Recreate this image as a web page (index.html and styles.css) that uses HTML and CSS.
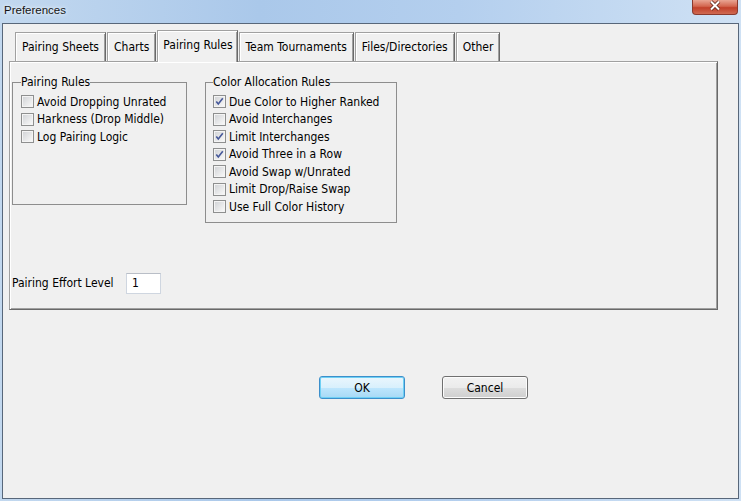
FILE: index.html
```html
<!DOCTYPE html>
<html>
<head>
<title>Preferences</title>
<link rel="stylesheet" href="styles.css">
</head>
<body>
<div class="window">
  <div class="titlebar">
    <span class="title">Preferences</span>
    <span class="close"><svg width="14" height="11" viewBox="0 0 14 11"><path class="x-shade" d="M3 1.5 L11 9.5 M11 1.5 L3 9.5"/><path class="x-mark" d="M3 1.5 L11 9.5 M11 1.5 L3 9.5"/></svg></span>
  </div>
  <div class="client">
    <div class="tabs">
      <div class="tab">Pairing Sheets</div>
      <div class="tab">Charts</div>
      <div class="tab selected">Pairing Rules</div>
      <div class="tab">Team Tournaments</div>
      <div class="tab">Files/Directories</div>
      <div class="tab">Other</div>
    </div>
    <div class="panel">
      <div class="groups">
        <fieldset class="group pairing">
          <legend>Pairing Rules</legend>
          <div class="check"><span class="box"></span>Avoid Dropping Unrated</div>
          <div class="check"><span class="box"></span>Harkness (Drop Middle)</div>
          <div class="check"><span class="box"></span>Log Pairing Logic</div>
        </fieldset>
        <fieldset class="group colors">
          <legend>Color Allocation Rules</legend>
          <div class="check"><span class="box"><svg viewBox="0 0 9 9"><path d="M1.3 4.4 L3.3 7 L7.8 1.2"/></svg></span>Due Color to Higher Ranked</div>
          <div class="check"><span class="box"></span>Avoid Interchanges</div>
          <div class="check"><span class="box"><svg viewBox="0 0 9 9"><path d="M1.3 4.4 L3.3 7 L7.8 1.2"/></svg></span>Limit Interchanges</div>
          <div class="check"><span class="box"><svg viewBox="0 0 9 9"><path d="M1.3 4.4 L3.3 7 L7.8 1.2"/></svg></span>Avoid Three in a Row</div>
          <div class="check"><span class="box"></span>Avoid Swap w/Unrated</div>
          <div class="check"><span class="box"></span>Limit Drop/Raise Swap</div>
          <div class="check"><span class="box"></span>Use Full Color History</div>
        </fieldset>
      </div>
      <div class="effort">
        <span class="effort-label">Pairing Effort Level</span>
        <span class="field">1</span>
      </div>
    </div>
    <div class="buttons">
      <button class="btn default">OK</button>
      <button class="btn">Cancel</button>
    </div>
  </div>
</div>
</body>
</html>
```

FILE: styles.css
```css
* { box-sizing: border-box; }

body {
  margin: 0;
  background: #c4d9ef;
  font: 12px "DejaVu Sans Condensed", "Liberation Sans", sans-serif;
  color: #000;
}

.window {
  width: 741px;
  height: 501px;
  padding: 0 2px 2px 2px;
  display: flex;
  flex-direction: column;
  background: linear-gradient(to right, #c2d8ef, #aac8ea 35%, #b4cfee 62%, #cfe1f4);
}

/* title bar */
.titlebar { height: 23px; display: flex; justify-content: space-between; align-items: flex-start; }
.title {
  font: 11.5px "Liberation Sans", sans-serif;
  color: #141414;
  padding: 4px 0 0 2px;
  text-shadow: 0 0 5px #e8f1fa, 0 0 3px #e8f1fa;
}
.close {
  width: 46px;
  height: 15px;
  margin-right: 1px;
  display: flex;
  justify-content: center;
  align-items: flex-start;
  border: 1px solid #8a3a2e;
  border-top: 0;
  border-radius: 0 0 4px 4px;
  background: linear-gradient(#e9a593, #d3664f 45%, #c2402a 55%, #cf6a52);
}
.close svg { display: block; }
.x-shade { stroke: #5e2418; stroke-width: 3.6; fill: none; }
.x-mark { stroke: #fff; stroke-width: 2; fill: none; }

/* dialog body */
.client {
  flex: 1;
  border: 1px solid #58677a;
  background: #f0f0f0;
  padding: 6px 20px 0 6px;
}

.tabs { display: flex; align-items: flex-end; padding-left: 6px; position: relative; z-index: 1; }
.tab {
  height: 29px;
  padding: 0 6px 1px 6px;
  margin-right: 1px;
  display: flex;
  align-items: center;
  white-space: nowrap;
  border: 1px solid #a0a0a0;
  border-right-color: #696969;
  border-bottom: 0;
  box-shadow: inset 1px 1px 0 #fff, inset -1px 0 0 #a0a0a0;
}
.tab.selected {
  height: 32px;
  margin-bottom: -1px;
  padding: 0 4px 4px 5px;
  background: #f0f0f0;
}

.panel {
  height: 249px;
  padding: 13px 2px 0 2px;
  border: 1px solid #a0a0a0;
  border-right-color: #696969;
  border-bottom-color: #696969;
  box-shadow: inset 1px 1px 0 #fff, inset -1px -1px 0 #a0a0a0;
}

.groups { display: flex; align-items: flex-start; }
.group {
  margin: 0;
  border: 1px solid #8d8d8d;
  padding: 4px 4px 6px 8px;
}
.group legend { padding: 0; line-height: 14px; }
.pairing { width: 175px; padding-bottom: 58px; }
.colors { width: 192px; margin-left: 18px; padding-left: 7px; }

.check { height: 17.5px; display: flex; align-items: center; white-space: nowrap; }
.box {
  width: 13px;
  height: 13px;
  margin-right: 3px;
  padding: 1px;
  border: 1px solid #8e8f8f;
  background: linear-gradient(135deg, #d3d5d8, #f7f7f7) content-box, #f4f4f4;
}
.box svg { display: block; width: 9px; height: 9px; }
.box path { fill: none; stroke: #46589a; stroke-width: 1.6; }

.effort { display: flex; align-items: center; margin-top: 50px; }
.effort-label { width: 114px; }
.field {
  width: 35px;
  height: 21px;
  padding-left: 5px;
  display: flex;
  align-items: center;
  background: #fff;
  border: 1px solid #cfd6e0;
  border-top-color: #b9bec7;
}

/* buttons */
.buttons { display: flex; margin: 66px 0 0 310px; }
.btn {
  width: 86px;
  height: 23px;
  margin-right: 37px;
  padding: 0;
  font: inherit;
  color: #000;
  border: 1px solid #707070;
  border-radius: 3px;
  background: linear-gradient(#f2f2f2, #ebebeb 50%, #dddddd 51%, #cfcfcf);
  box-shadow: inset 0 0 0 1px #fcfcfc;
}
.btn.default {
  border-color: #3c8fcb;
  background: linear-gradient(#eaf6fd, #d9f0fc 50%, #bee6fd 51%, #a7d9f5);
  box-shadow: inset 0 0 0 1px #6fd0f4;
}
```
